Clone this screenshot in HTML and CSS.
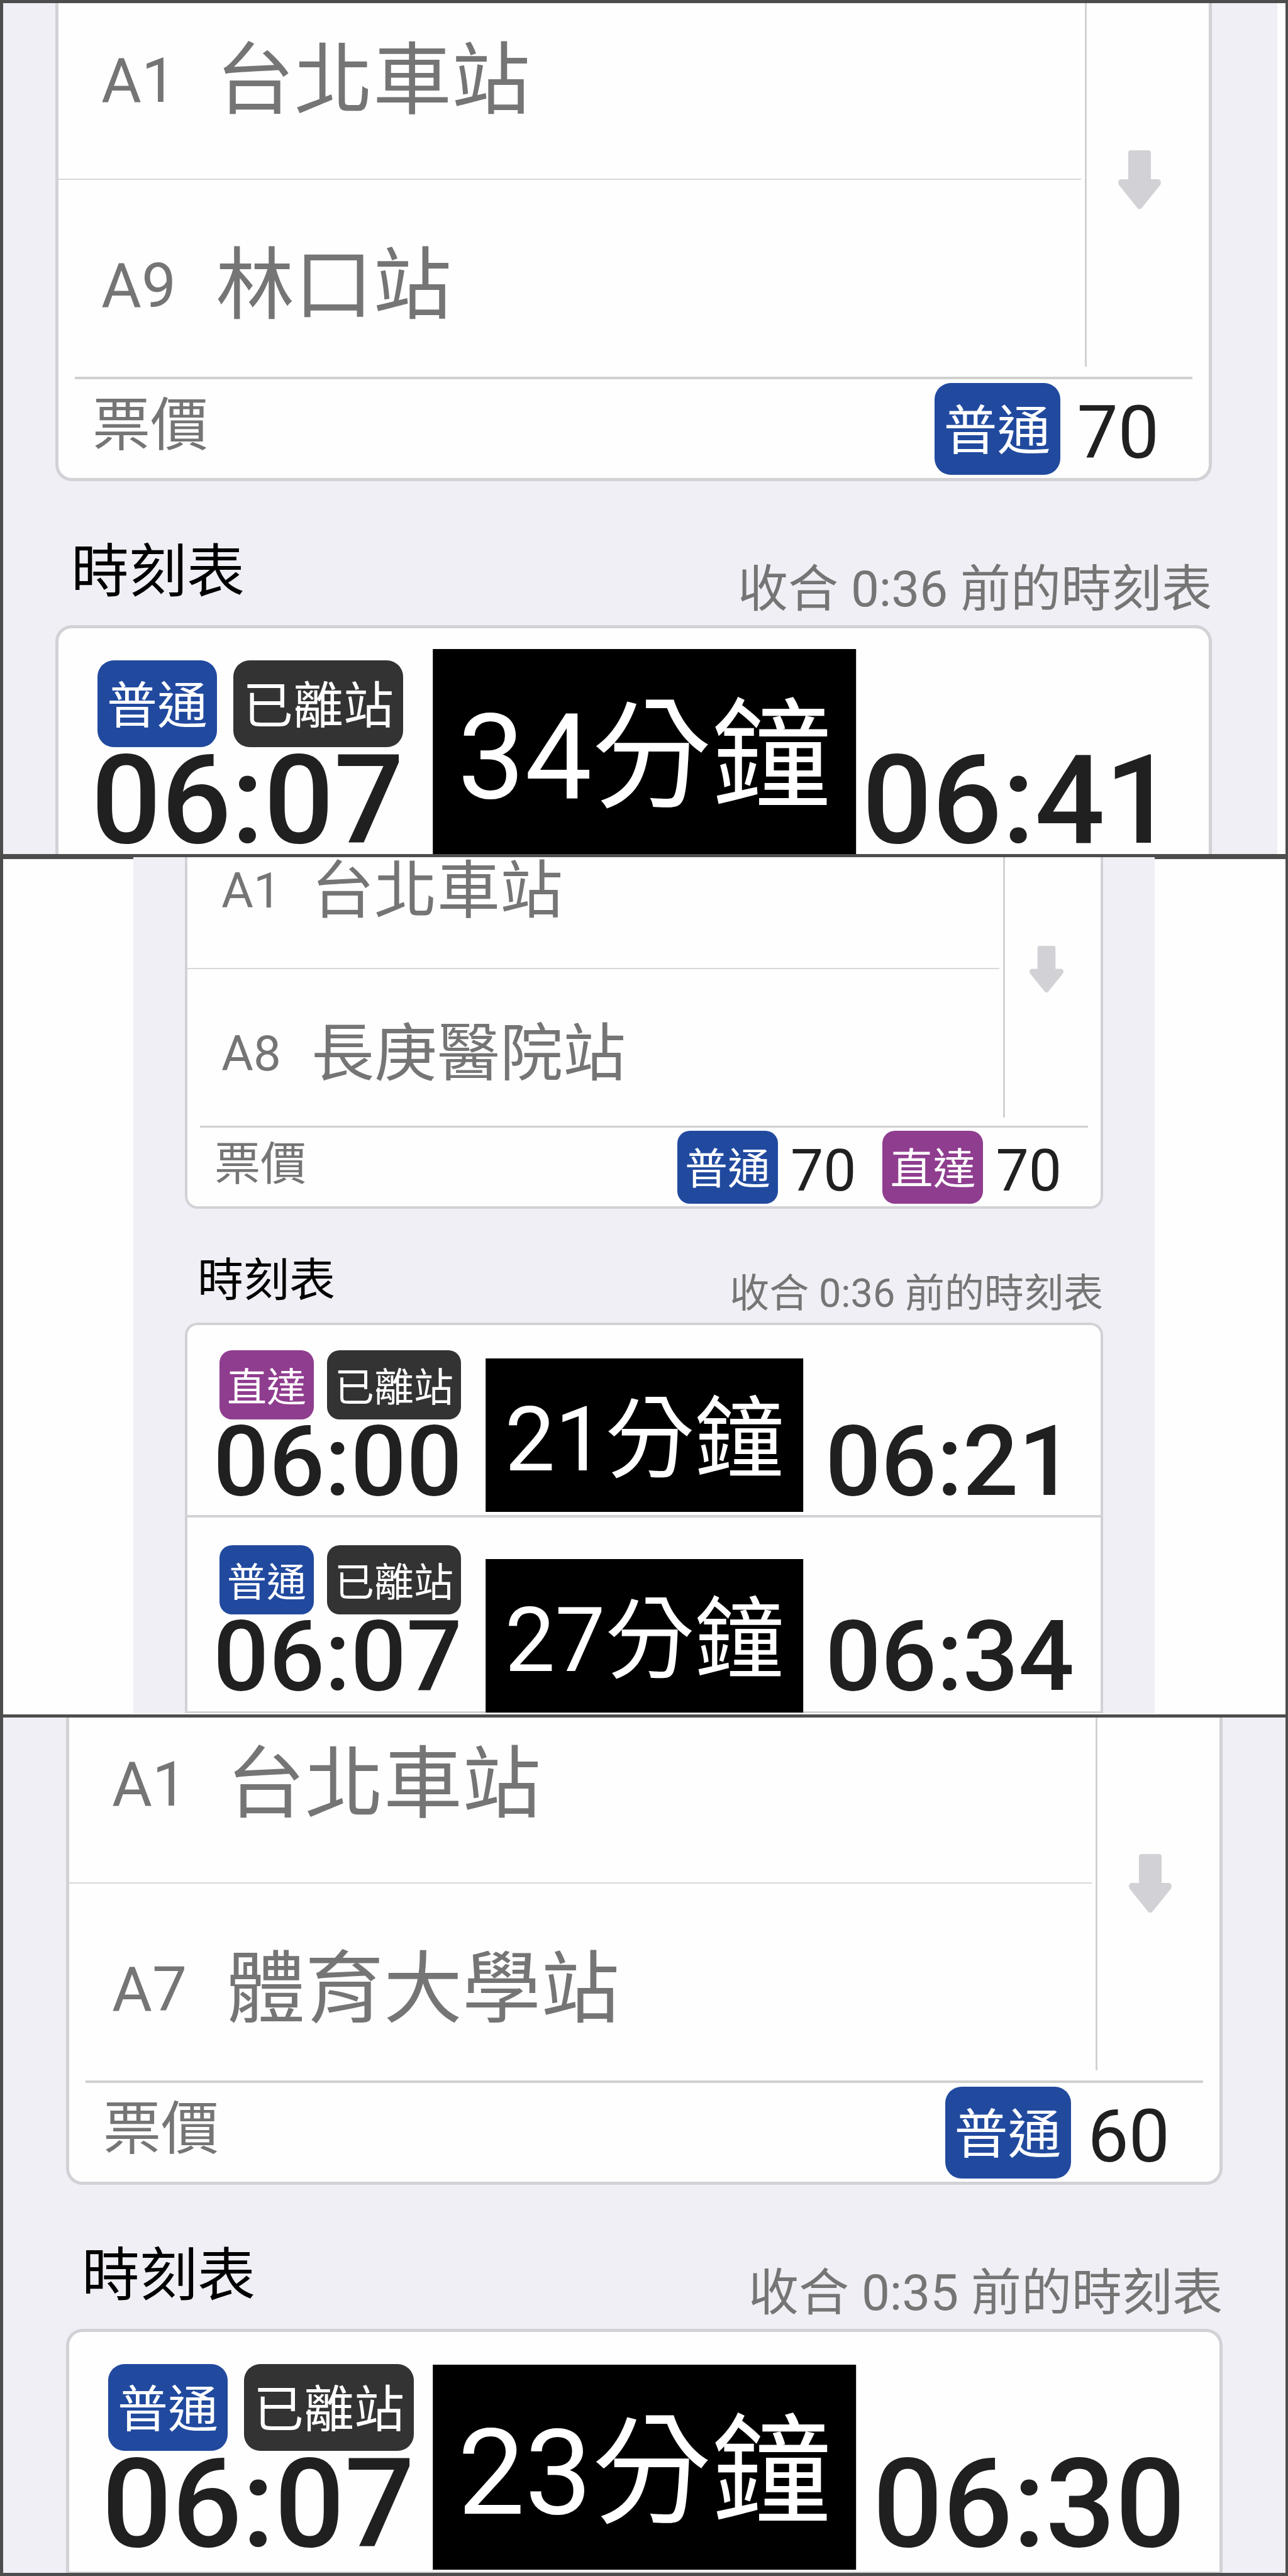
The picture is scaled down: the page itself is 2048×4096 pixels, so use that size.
FILE: index.html
```html
<!DOCTYPE html>
<html lang="zh-Hant">
<head>
<meta charset="utf-8">
<meta name="viewport" content="width=device-width, initial-scale=1">
<title>時刻表</title>
<link rel="stylesheet" href="styles.css">
</head>
<body>
<main class="board">

  <section class="panel panel-linkou">
    <div class="screen">
      <div class="card route-card">
        <div class="route">
          <div class="stations">
            <div class="station"><span class="code">A1</span><span class="name">台北車站</span></div>
            <div class="station"><span class="code">A9</span><span class="name">林口站</span></div>
          </div>
          <button class="swap" type="button" aria-label="交換起訖站">
            <svg class="arrow" viewBox="0 0 68 94" aria-hidden="true"><path d="M20 0H32H48Q52 0 52 4V46H63Q70 47 67 55L38 91Q34 96 30 91L1 55Q-2 47 5 46H16V4Q16 0 20 0Z"/></svg>
          </button>
        </div>
        <div class="fare">
          <span class="fare-label">票價</span>
          <span class="price"><span class="badge local">普通</span><span class="amount">70</span></span>
        </div>
      </div>
      <header class="heading">
        <h2>時刻表</h2>
        <a href="#linkou">收合 0:36 前的時刻表</a>
      </header>
      <ul class="card timetable" id="linkou">
        <li class="trip">
          <div class="departure">
            <div class="tags"><span class="badge local">普通</span><span class="badge left">已離站</span></div>
            <time>06:07</time>
          </div>
          <time>06:41</time>
          <strong class="duration">34分鐘</strong>
        </li>
      </ul>
    </div>
  </section>

  <section class="panel panel-hospital">
    <div class="screen">
      <div class="card route-card">
        <div class="route">
          <div class="stations">
            <div class="station"><span class="code">A1</span><span class="name">台北車站</span></div>
            <div class="station"><span class="code">A8</span><span class="name">長庚醫院站</span></div>
          </div>
          <button class="swap" type="button" aria-label="交換起訖站">
            <svg class="arrow" viewBox="0 0 68 94" aria-hidden="true"><path d="M20 0H32H48Q52 0 52 4V46H63Q70 47 67 55L38 91Q34 96 30 91L1 55Q-2 47 5 46H16V4Q16 0 20 0Z"/></svg>
          </button>
        </div>
        <div class="fare">
          <span class="fare-label">票價</span>
          <span class="price"><span class="badge local">普通</span><span class="amount">70</span></span>
          <span class="price"><span class="badge express">直達</span><span class="amount">70</span></span>
        </div>
      </div>
      <header class="heading">
        <h2>時刻表</h2>
        <a href="#hospital">收合 0:36 前的時刻表</a>
      </header>
      <ul class="card timetable" id="hospital">
        <li class="trip">
          <div class="departure">
            <div class="tags"><span class="badge express">直達</span><span class="badge left">已離站</span></div>
            <time>06:00</time>
          </div>
          <time>06:21</time>
          <strong class="duration duration-first">21分鐘</strong>
        </li>
        <li class="trip">
          <div class="departure">
            <div class="tags"><span class="badge local">普通</span><span class="badge left">已離站</span></div>
            <time>06:07</time>
          </div>
          <time>06:34</time>
          <strong class="duration">27分鐘</strong>
        </li>
      </ul>
    </div>
  </section>

  <section class="panel panel-university">
    <div class="screen">
      <div class="card route-card">
        <div class="route">
          <div class="stations">
            <div class="station"><span class="code">A1</span><span class="name">台北車站</span></div>
            <div class="station"><span class="code">A7</span><span class="name">體育大學站</span></div>
          </div>
          <button class="swap" type="button" aria-label="交換起訖站">
            <svg class="arrow" viewBox="0 0 68 94" aria-hidden="true"><path d="M20 0H32H48Q52 0 52 4V46H63Q70 47 67 55L38 91Q34 96 30 91L1 55Q-2 47 5 46H16V4Q16 0 20 0Z"/></svg>
          </button>
        </div>
        <div class="fare">
          <span class="fare-label">票價</span>
          <span class="price"><span class="badge local">普通</span><span class="amount">60</span></span>
        </div>
      </div>
      <header class="heading">
        <h2>時刻表</h2>
        <a href="#university">收合 0:35 前的時刻表</a>
      </header>
      <ul class="card timetable" id="university">
        <li class="trip">
          <div class="departure">
            <div class="tags"><span class="badge local">普通</span><span class="badge left">已離站</span></div>
            <time>06:07</time>
          </div>
          <time>06:30</time>
          <strong class="duration">23分鐘</strong>
        </li>
      </ul>
    </div>
  </section>

</main>
</body>
</html>
```

FILE: styles.css
```css
* {
  box-sizing: border-box;
}

body {
  margin: 0;
  background: #4d4d4d;
  color: #202020;
  font-family: Roboto, "Noto Sans CJK TC", sans-serif;
}

.board {
  display: grid;
  gap: 5px;
  padding: 5px 4px 5px 5px;
}

/* Sizes of the full-width panels */
.panel {
  --cut: 45px;
  --line: 5px;
  --rule: 4px;
  --radius: 26px;
  --inset: 26px;
  --code: 98px;
  --code-width: 182px;
  --name: 125px;
  --name-line: 126px;
  --station-pad: 68px;
  --station-top: 106px;
  --station-bottom: 92px;
  --last-bottom: 81px;
  --swap-width: 171px;
  --swap-top: 279px;
  --swap-end: 16px;
  --arrow: 68px;
  --label: 92px;
  --label-pad: 54px;
  --fare-height: 157px;
  --fare-badge: 85px;
  --fare-badge-height: 146px;
  --fare-end: 79px;
  --fare-gap: 27px;
  --amount: 116px;
  --heading-pad: 78px 0 17px 25px;
  --title-line: 134px;
  --small: 80px;
  --small-line: 80px;
  --badge-height: 138px;
  --badge-pad: 15px;
  --tag-gap: 26px;
  --time: 196px;
  --time-line: 170px;
  --trip-pad: 51px 54px 0 52px;
  --duration: 190px;
  --duration-line: 308px;
  --duration-pad: 18px 40px 0;
  --duration-bottom: 0px;
  position: relative;
  overflow: hidden;
  background: #fefefe;
}

.panel-linkou {
  padding-right: 13px;
}

.panel-linkou .screen {
  padding: 0 104px 0 83px;
}

.panel-university {
  --cut: 62px;
  --trip-pad: 51px 54px 22px 52px;
  --duration-bottom: 5px;
}

.panel-university .screen {
  padding: 0 100px;
}

.panel-university .timetable {
  border-bottom: 2px solid #d2d2d6;
}

/* The middle panel is narrower, with a white gutter on each side */
.panel-hospital {
  --cut: 81px;
  --line: 4px;
  --rule: 3px;
  --radius: 20px;
  --inset: 20px;
  --code: 78px;
  --code-width: 143px;
  --name: 100px;
  --name-line: 100px;
  --station-pad: 54px;
  --station-top: 85px;
  --station-bottom: 72px;
  --last-bottom: 64px;
  --swap-width: 135px;
  --swap-top: 222px;
  --swap-end: 13px;
  --arrow: 54px;
  --label: 73px;
  --label-pad: 43px;
  --fare-height: 125px;
  --fare-badge: 68px;
  --fare-badge-height: 116px;
  --fare-end: 62px;
  --fare-gap: 20px;
  --amount: 93px;
  --heading-pad: 61px 0 14px 20px;
  --title-line: 106px;
  --small: 63px;
  --small-line: 64px;
  --badge-height: 110px;
  --badge-pad: 12px;
  --tag-gap: 21px;
  --time: 156px;
  --time-line: 134px;
  --trip-pad: 40px 42px 18px 41px;
  --duration: 142px;
  --duration-line: 228px;
  --duration-pad: 16px 31px 0;
  --duration-bottom: 3px;
  padding: 0 208px 0 207px;
  background: linear-gradient(#4d4d4d 3px, #fefefe 3px);
}

.panel-hospital .screen {
  padding: 0 82px;
}

.panel-hospital .trip + .trip {
  padding-top: 44px;
  padding-bottom: 20px;
  border-top: 4px solid #d2d2d6;
  border-bottom: 3px solid #d2d2d6;
  margin-bottom: 2px;
}

.screen {
  background: #efeff5;
}

.card {
  border: var(--line) solid #d2d2d6;
  background: #fefefe;
}

.route-card {
  margin-top: calc(-1 * var(--cut));
  border-top: 0;
  border-radius: 0 0 var(--radius) var(--radius);
}

.route {
  display: flex;
  gap: 6px;
}

.stations {
  flex: 1;
}

.station {
  display: flex;
  align-items: center;
  padding: var(--station-top) 0 var(--station-bottom) var(--station-pad);
  color: #757575;
  line-height: var(--name-line);
  white-space: nowrap;
}

.station + .station {
  padding-bottom: var(--last-bottom);
  border-top: 2px solid #d8d8da;
}

.code {
  width: var(--code-width);
  font-size: var(--code);
}

.name {
  font-size: var(--name);
}

.swap {
  display: flex;
  justify-content: center;
  align-items: flex-start;
  width: var(--swap-width);
  margin: 0 var(--inset) var(--swap-end) 0;
  padding: var(--swap-top) 0 0;
  border: 0;
  border-left: 3px solid #d2d2d4;
  background: none;
}

.arrow {
  width: var(--arrow);
  fill: #d1d1d6;
}

.fare {
  display: flex;
  align-items: center;
  gap: 42px;
  height: calc(var(--fare-height) + var(--rule));
  margin: 0 var(--inset);
  padding-right: calc(var(--fare-end) - var(--inset));
  padding-left: calc(var(--label-pad) - var(--inset));
  border-top: var(--rule) solid #d0d0d0;
}

.fare-label {
  margin-right: auto;
  padding-bottom: 10px;
  color: #757575;
  font-size: var(--label);
  line-height: var(--name-line);
}

.price {
  display: flex;
  align-items: center;
  gap: var(--fare-gap);
}

.price .badge {
  height: var(--fare-badge-height);
  padding: 8px 15px 0;
  font-size: var(--fare-badge);
  line-height: calc(var(--fare-badge-height) - 8px);
}

.panel-hospital .price .badge {
  padding: 8px 12px 0;
}

.amount {
  padding-top: 12px;
  font-size: var(--amount);
  line-height: var(--name-line);
}

.badge {
  height: var(--badge-height);
  padding: 9px var(--badge-pad) 0;
  border-radius: var(--radius);
  color: #fff;
  font-size: var(--small);
  line-height: calc(var(--badge-height) - 9px);
  white-space: nowrap;
}

.local {
  background: #214a9f;
}

.express {
  background: #8f3d8f;
}

.left {
  background: #333;
}

.heading {
  display: flex;
  justify-content: space-between;
  align-items: flex-end;
  padding: var(--heading-pad);
}

.heading h2 {
  margin: 0;
  color: #000;
  font-size: var(--label);
  font-weight: 400;
  line-height: var(--title-line);
}

.heading a {
  color: #757575;
  font-size: var(--small);
  line-height: var(--small-line);
  text-decoration: none;
}

.timetable {
  margin: 0;
  padding: 0;
  border-bottom: 0;
  border-radius: var(--radius) var(--radius) 0 0;
  list-style: none;
}

.trip {
  display: flex;
  justify-content: space-between;
  align-items: flex-end;
  padding: var(--trip-pad);
}

.tags {
  display: flex;
  gap: var(--tag-gap);
  margin-left: 10px;
}

.trip time {
  display: block;
  font-size: var(--time);
  font-weight: 500;
  line-height: var(--time-line);
}

/* Travel time, laid over the trip in the middle of the panel */
.duration {
  position: absolute;
  bottom: var(--duration-bottom);
  left: 50%;
  padding: var(--duration-pad);
  transform: translateX(-50%);
  background: #000;
  color: #fff;
  font-size: var(--duration);
  font-weight: 400;
  line-height: var(--duration-line);
  white-space: nowrap;
}

.duration-first {
  bottom: 322px;
}
```
